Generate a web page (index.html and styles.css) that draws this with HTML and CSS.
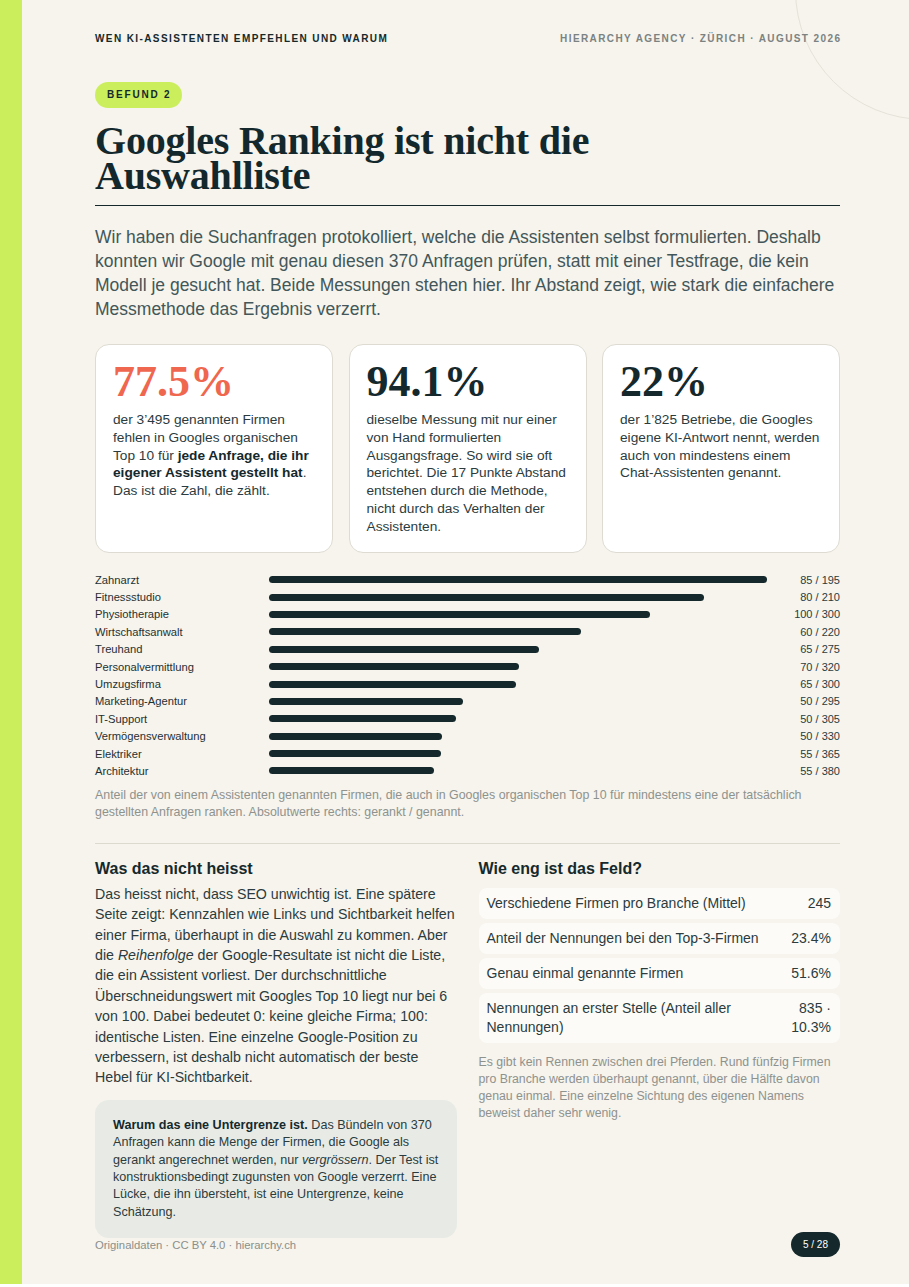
FILE: index.html
```html
<!DOCTYPE html>
<html lang="de">
<head>
<meta charset="utf-8">
<title>Befund 2 – Googles Ranking ist nicht die Auswahlliste</title>
<link rel="stylesheet" href="styles.css">
</head>
<body>
<div class="page">
  <div class="stripe"></div>
  <div class="deco"></div>
  <main class="content">
    <header class="top">
      <span class="top-left">WEN KI-ASSISTENTEN EMPFEHLEN UND WARUM</span>
      <span class="top-right">HIERARCHY AGENCY · ZÜRICH · AUGUST 2026</span>
    </header>

    <span class="badge">BEFUND 2</span>
    <h1 class="title">Googles Ranking ist nicht die<br>Auswahlliste</h1>

    <p class="lead">Wir haben die Suchanfragen protokolliert, welche die Assistenten selbst formulierten. Deshalb konnten wir Google mit genau diesen 370 Anfragen prüfen, statt mit einer Testfrage, die kein Modell je gesucht hat. Beide Messungen stehen hier. Ihr Abstand zeigt, wie stark die einfachere Messmethode das Ergebnis verzerrt.</p>

    <section class="cards">
      <div class="card">
        <div class="num num-accent">77.5%</div>
        <p class="card-text">der 3’495 genannten Firmen fehlen in Googles organischen Top&nbsp;10 für <strong>jede Anfrage, die ihr eigener Assistent gestellt hat</strong>. Das ist die Zahl, die zählt.</p>
      </div>
      <div class="card">
        <div class="num">94.1%</div>
        <p class="card-text">dieselbe Messung mit nur einer von Hand formulierten Ausgangsfrage. So wird sie oft berichtet. Die 17 Punkte Abstand entstehen durch die Methode, nicht durch das Verhalten der Assistenten.</p>
      </div>
      <div class="card">
        <div class="num">22%</div>
        <p class="card-text">der 1’825 Betriebe, die Googles eigene KI-Antwort nennt, werden auch von mindestens einem Chat-Assistenten genannt.</p>
      </div>
    </section>

    <section class="chart">
      <div class="row"><span class="label">Zahnarzt</span><span class="track"><span class="bar" style="width:96.87%"></span></span><span class="val">85 / 195</span></div>
      <div class="row"><span class="label">Fitnessstudio</span><span class="track"><span class="bar" style="width:84.66%"></span></span><span class="val">80 / 210</span></div>
      <div class="row"><span class="label">Physiotherapie</span><span class="track"><span class="bar" style="width:74.07%"></span></span><span class="val">100 / 300</span></div>
      <div class="row"><span class="label">Wirtschaftsanwalt</span><span class="track"><span class="bar" style="width:60.61%"></span></span><span class="val">60 / 220</span></div>
      <div class="row"><span class="label">Treuhand</span><span class="track"><span class="bar" style="width:52.53%"></span></span><span class="val">65 / 275</span></div>
      <div class="row"><span class="label">Personalvermittlung</span><span class="track"><span class="bar" style="width:48.61%"></span></span><span class="val">70 / 320</span></div>
      <div class="row"><span class="label">Umzugsfirma</span><span class="track"><span class="bar" style="width:48.15%"></span></span><span class="val">65 / 300</span></div>
      <div class="row"><span class="label">Marketing-Agentur</span><span class="track"><span class="bar" style="width:37.66%"></span></span><span class="val">50 / 295</span></div>
      <div class="row"><span class="label">IT-Support</span><span class="track"><span class="bar" style="width:36.43%"></span></span><span class="val">50 / 305</span></div>
      <div class="row"><span class="label">Vermögensverwaltung</span><span class="track"><span class="bar" style="width:33.67%"></span></span><span class="val">50 / 330</span></div>
      <div class="row"><span class="label">Elektriker</span><span class="track"><span class="bar" style="width:33.49%"></span></span><span class="val">55 / 365</span></div>
      <div class="row"><span class="label">Architektur</span><span class="track"><span class="bar" style="width:32.16%"></span></span><span class="val">55 / 380</span></div>
    </section>
    <p class="caption">Anteil der von einem Assistenten genannten Firmen, die auch in Googles organischen Top 10 für mindestens eine der tatsächlich gestellten Anfragen ranken. Absolutwerte rechts: gerankt / genannt.</p>

    <section class="split">
      <div class="col">
        <h2 class="h2">Was das nicht heisst</h2>
        <p class="body">Das heisst nicht, dass SEO unwichtig ist. Eine spätere Seite zeigt: Kennzahlen wie Links und Sichtbarkeit helfen einer Firma, überhaupt in die Auswahl zu kommen. Aber die <em>Reihenfolge</em> der Google-Resultate ist nicht die Liste, die ein Assistent vorliest. Der durchschnittliche Überschneidungswert mit Googles Top 10 liegt nur bei 6 von 100. Dabei bedeutet 0: keine gleiche Firma; 100: identische Listen. Eine einzelne Google-Position zu verbessern, ist deshalb nicht automatisch der beste Hebel für KI-Sichtbarkeit.</p>
        <div class="note"><strong>Warum das eine Untergrenze ist.</strong> Das Bündeln von 370 Anfragen kann die Menge der Firmen, die Google als gerankt angerechnet werden, nur <em>vergrössern</em>. Der Test ist konstruktionsbedingt zugunsten von Google verzerrt. Eine Lücke, die ihn übersteht, ist eine Untergrenze, keine Schätzung.</div>
      </div>
      <div class="col">
        <h2 class="h2 h2-right">Wie eng ist das Feld?</h2>
        <div class="table">
          <div class="trow"><span class="tlabel">Verschiedene Firmen pro Branche (Mittel)</span><span class="tval">245</span></div>
          <div class="trow"><span class="tlabel">Anteil der Nennungen bei den Top-3-Firmen</span><span class="tval">23.4%</span></div>
          <div class="trow"><span class="tlabel">Genau einmal genannte Firmen</span><span class="tval">51.6%</span></div>
          <div class="trow"><span class="tlabel">Nennungen an erster Stelle (Anteil aller Nennungen)</span><span class="tval">835 · 10.3%</span></div>
        </div>
        <p class="side-caption">Es gibt kein Rennen zwischen drei Pferden. Rund fünfzig Firmen pro Branche werden überhaupt genannt, über die Hälfte davon genau einmal. Eine einzelne Sichtung des eigenen Namens beweist daher sehr wenig.</p>
      </div>
    </section>

    <footer class="foot">
      <span class="foot-text">Originaldaten · CC BY 4.0 · hierarchy.ch</span>
      <span class="pager">5 / 28</span>
    </footer>
  </main>
</div>
</body>
</html>
```

FILE: styles.css
```css
html, body {
  margin: 0;
  padding: 0;
  background: #ffffff;
}

body {
  font-family: "Liberation Sans", Arial, sans-serif;
  color: #15292d;
}

.page {
  position: relative;
  width: 909px;
  height: 1284px;
  background: #f6f4ec;
  display: flex;
  overflow: hidden;
}

.stripe {
  flex: 0 0 22px;
  background: #cbee5c;
}

.deco {
  position: absolute;
  left: 795px;
  top: -140px;
  width: 260px;
  height: 260px;
  border: 1px solid #e5e2d9;
  border-radius: 50%;
  box-sizing: border-box;
  pointer-events: none;
}

.content {
  position: relative;
  flex: 1;
  padding: 33px 69px 0 73px;
  display: flex;
  flex-direction: column;
  min-width: 0;
}

/* header */
.top {
  display: flex;
  justify-content: space-between;
  font-size: 10px;
  line-height: 12px;
  font-weight: 700;
  letter-spacing: 1.4px;
}

.top-left {
  color: #15292d;
}

.top-right {
  color: #7b8282;
  margin-right: -1.4px;
}

.badge {
  align-self: flex-start;
  margin-top: 37px;
  height: 26px;
  line-height: 26px;
  padding: 0 11px 0 12px;
  border-radius: 13px;
  background: #cbee5c;
  font-size: 10px;
  font-weight: 700;
  letter-spacing: 1.8px;
  color: #15292d;
}

.title {
  margin: 15px 0 0;
  padding-bottom: 12px;
  border-bottom: 1.5px solid #15292d;
  font-family: "Liberation Serif", "Times New Roman", serif;
  font-weight: 700;
  font-size: 40px;
  line-height: 35px;
  letter-spacing: -0.2px;
  color: #13282c;
}

.lead {
  margin: 19px -8px 0 0;
  font-size: 17.5px;
  line-height: 24px;
  color: #43575a;
}

/* cards */
.cards {
  margin-top: 23px;
  display: grid;
  grid-template-columns: repeat(3, 1fr);
  gap: 15.5px;
}

.card {
  background: #ffffff;
  border: 1px solid #dedbd2;
  border-radius: 14px;
  padding: 15px 16px 16px 17px;
  min-height: 209px;
  box-sizing: border-box;
}

.num {
  font-family: "Liberation Serif", "Times New Roman", serif;
  font-weight: 700;
  font-size: 44px;
  line-height: 44px;
  color: #15292d;
}

.num-accent {
  color: #f0674f;
}

.card-text {
  margin: 7px 0 0;
  font-size: 13.7px;
  line-height: 17.8px;
  color: #2b3b3e;
}

.card-text strong {
  color: #15292d;
}

/* chart */
.chart {
  margin-top: 18px;
  display: flex;
  flex-direction: column;
}

.row {
  display: grid;
  grid-template-columns: 174px 1fr 57px;
  align-items: center;
  height: 17.4px;
}

.label {
  font-size: 11.2px;
  color: #1f3033;
  white-space: nowrap;
}

.track {
  display: block;
  height: 7px;
}

.bar {
  display: block;
  height: 7px;
  border-radius: 4px;
  background: #15292d;
}

.val {
  text-align: right;
  font-size: 11px;
  color: #2b3b3e;
  white-space: nowrap;
}

.caption {
  margin: 7px 0 0;
  font-size: 12.4px;
  line-height: 17px;
  color: #8e928f;
}

/* split */
.split {
  margin-top: 22px;
  border-top: 1px solid #dcd9cf;
  padding-top: 15px;
  display: grid;
  grid-template-columns: 1fr 1fr;
  gap: 22px;
}

.col {
  min-width: 0;
}

.h2 {
  margin: 0 0 5px;
  font-size: 16px;
  line-height: 20px;
  font-weight: 700;
  color: #15292d;
}

.h2-right {
  margin-bottom: 9px;
}

.body {
  margin: 0;
  font-size: 14.2px;
  line-height: 20.4px;
  color: #2b3b3e;
}

.note {
  margin-top: 12px;
  background: #e8ebe5;
  border-radius: 14px;
  padding: 17px 18px;
  font-size: 12.6px;
  line-height: 17.4px;
  color: #2b3b3e;
}

.note strong {
  color: #15292d;
}

.table {
  display: flex;
  flex-direction: column;
  gap: 4px;
}

.trow {
  display: flex;
  justify-content: space-between;
  align-items: flex-start;
  gap: 12px;
  background: #fcfbf8;
  border-radius: 8px;
  padding: 6px 9px 6px 8px;
  font-size: 14px;
  line-height: 19px;
  color: #2b3b3e;
}

.tval {
  text-align: right;
  max-width: 62px;
}

.side-caption {
  margin: 11px 0 0;
  font-size: 12.3px;
  line-height: 17px;
  color: #8e928f;
}

/* footer */
.foot {
  margin-top: -6px;
  display: flex;
  justify-content: space-between;
  align-items: center;
}

.foot-text {
  font-size: 11.3px;
  color: #8a8f8c;
}

.pager {
  height: 25px;
  line-height: 25px;
  padding: 0 12px;
  border-radius: 13px;
  background: #15292d;
  color: #ffffff;
  font-size: 10px;
}
```
